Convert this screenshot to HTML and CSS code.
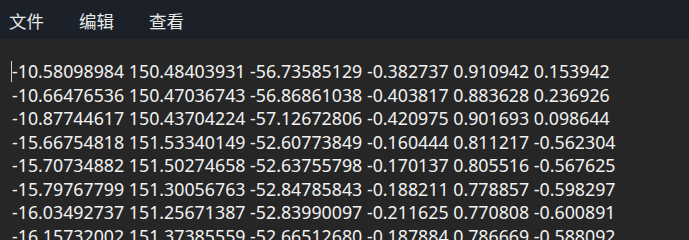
FILE: index.html
```html
<!DOCTYPE html>
<html lang="zh">
<head>
<meta charset="utf-8">
<link rel="stylesheet" href="styles.css">
</head>
<body>
<div class="app">
  <nav class="menubar">
    <span class="menu-item">文件</span>
    <span class="menu-item">编辑</span>
    <span class="menu-item">查看</span>
  </nav>
  <div class="editor">
    <div class="line"><span class="caret"></span>-10.58098984 150.48403931 -56.73585129 -0.382737 0.910942 0.153942</div>
    <div class="line">-10.66476536 150.47036743 -56.86861038 -0.403817 0.883628 0.236926</div>
    <div class="line">-10.87744617 150.43704224 -57.12672806 -0.420975 0.901693 0.098644</div>
    <div class="line">-15.66754818 151.53340149 -52.60773849 -0.160444 0.811217 -0.562304</div>
    <div class="line">-15.70734882 151.50274658 -52.63755798 -0.170137 0.805516 -0.567625</div>
    <div class="line">-15.79767799 151.30056763 -52.84785843 -0.188211 0.778857 -0.598297</div>
    <div class="line">-16.03492737 151.25671387 -52.83990097 -0.211625 0.770808 -0.600891</div>
    <div class="line">-16.15732002 151.37385559 -52.66512680 -0.187884 0.786669 -0.588092</div>
  </div>
</div>
</body>
</html>
```
FILE: styles.css
```css
html, body {
  margin: 0;
  padding: 0;
  background: #262626;
  overflow: hidden;
}
.app {
  width: 689px;
  height: 240px;
  display: flex;
  flex-direction: column;
  font-family: "Noto Sans", "Noto Sans CJK SC", sans-serif;
}
.menubar {
  height: 39px;
  flex: none;
  background: #1b2029;
  display: flex;
  align-items: center;
  gap: 35px;
  padding-left: 9px;
  padding-top: 1px;
  box-sizing: border-box;
}
.menu-item {
  color: #e8e8e8;
  font-size: 17.5px;
  font-family: "Noto Sans CJK SC", sans-serif;
}
.editor {
  padding: 21px 0 0 12px;
  color: #f2f2f2;
  font-size: 17.8px;
  line-height: 23.5px;
  white-space: nowrap;
}
.line {
  position: relative;
}
.caret {
  position: absolute;
  left: -1px;
  top: 1px;
  width: 1px;
  height: 21px;
  background: #d0d0d0;
}
```
